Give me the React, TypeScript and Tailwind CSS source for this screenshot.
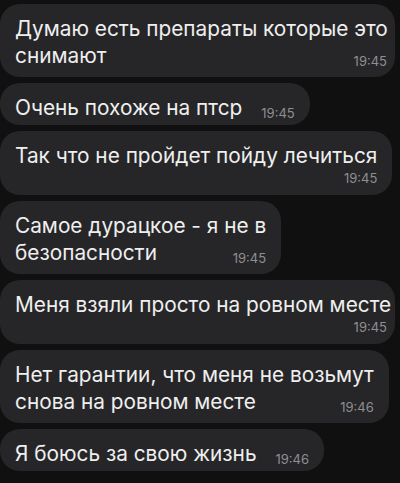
type Message = {
  lines: string[];
  time: string;
  timeBelow?: boolean;
  tight?: boolean;
};

const messages: Message[] = [
  { lines: ['Думаю есть препараты которые это', 'снимают'], time: '19:45', tight: true },
  { lines: ['Очень похоже на птср'], time: '19:45' },
  { lines: ['Так что не пройдет пойду лечиться'], time: '19:45', timeBelow: true },
  { lines: ['Самое дурацкое - я не в', 'безопасности'], time: '19:45' },
  { lines: ['Меня взяли просто на ровном месте'], time: '19:45', timeBelow: true, tight: true },
  { lines: ['Нет гарантии, что меня не возьмут', 'снова на ровном месте'], time: '19:46' },
  { lines: ['Я боюсь за свою жизнь'], time: '19:46' },
];

function Time({ value }: { value: string }) {
  return (
    <span className="shrink-0 text-[13px] leading-[13px] text-[#8e8e93] mb-[1px]">{value}</span>
  );
}

function Bubble({ msg }: { msg: Message }) {
  const head = msg.timeBelow ? msg.lines : msg.lines.slice(0, -1);
  const last = msg.lines[msg.lines.length - 1];

  // bottom padding differs a bit between one-line, two-line and time-below bubbles
  let pb = 'pb-[4px]';
  if (msg.timeBelow) pb = 'pb-[7px]';
  else if (msg.lines.length > 1) pb = 'pb-[8px]';

  return (
    <div
      className={`w-fit max-w-[395px] rounded-[20px] bg-[#262628] pl-[15px] pt-[11px] ${pb} ${
        msg.tight ? 'pr-[8px]' : 'pr-[15px]'
      }`}
    >
      {head.map((line) => (
        <div key={line} className="whitespace-nowrap text-[20.8px] leading-[27px] text-[#efefef]">
          {line}
        </div>
      ))}
      {msg.timeBelow ? (
        <div className="flex justify-end mt-[3px] mb-[2px]">
          <Time value={msg.time} />
        </div>
      ) : (
        <div className="flex items-end">
          <span className="whitespace-nowrap text-[20.8px] leading-[27px] text-[#efefef]">{last}</span>
          <span className="ml-auto pl-[19px] flex">
            <Time value={msg.time} />
          </span>
        </div>
      )}
    </div>
  );
}

export default function App() {
  return (
    <div className="h-[483px] w-[400px] overflow-hidden bg-[#101011] pt-[4px] font-['Inter','Liberation_Sans',Arial,sans-serif]">
      <div className="flex flex-col gap-[6px]">
        {messages.map((m, i) => (
          <Bubble key={i} msg={m} />
        ))}
      </div>
    </div>
  );
}
